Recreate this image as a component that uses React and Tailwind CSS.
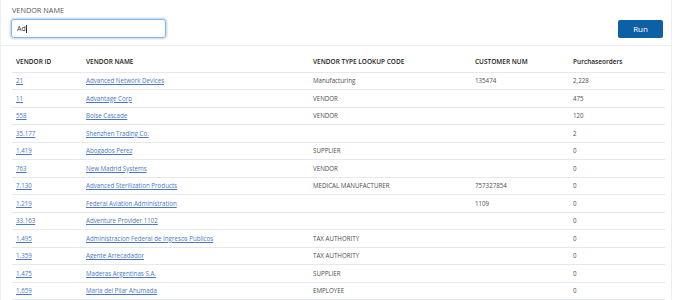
import React from 'react'

const rows = [
  ['21', 'Advanced Network Devices', 'Manufacturing', '135474', '2,228'],
  ['11', 'Advantage Corp', 'VENDOR', '', '475'],
  ['558', 'Boise Cascade', 'VENDOR', '', '120'],
  ['35.177', 'Shenzhen Trading Co.', '', '', '2'],
  ['1.419', 'Abogados Perez', 'SUPPLIER', '', '0'],
  ['763', 'New Madrid Systems', 'VENDOR', '', '0'],
  ['7.130', 'Advanced Sterilization Products', 'MEDICAL MANUFACTURER', '757327854', '0'],
  ['1.219', 'Federal Aviation Administration', '', '1109', '0'],
  ['33.163', 'Adventure Provider 1102', '', '', '0'],
  ['1.495', 'Administracion Federal de Ingresos Publicos', 'TAX AUTHORITY', '', '0'],
  ['1.359', 'Agente Arrecadador', 'TAX AUTHORITY', '', '0'],
  ['1.475', 'Maderas Argentinas S.A.', 'SUPPLIER', '', '0'],
  ['1.659', 'Maria del Pilar Ahumada', 'EMPLOYEE', '', '0'],
]

const App = () => {
  return (
    <div className="w-[675px] h-[300px] overflow-hidden bg-white" style={{ fontFamily: '"Open Sans", "Liberation Sans", sans-serif' }}>
      <div className="w-[672px] h-full border-r border-l border-[#eceef1]">
        {/* Filter bar */}
        <div className="flex items-end justify-between h-[46px] pl-[10px] pr-[8px] pb-[7px] border-b border-[#eceef1]">
          <div className="flex flex-col">
            <label className="text-[7.3px] leading-none text-[#555] uppercase mb-[5px] ml-[1px]">Vendor Name</label>
            <div className="w-[155px] h-[19px] border border-[#86b4ea] rounded-[3px] shadow-[0_0_0_1.5px_rgba(120,170,235,0.35)] flex items-center px-[5px]">
              <span className="text-[7px] text-[#333] leading-none">Ad</span>
              <span className="w-px h-[8px] bg-[#333]" />
            </div>
          </div>
          <button className="w-[45px] h-[18px] rounded-[2px] bg-[#0d5fa6] text-white text-[8px] leading-none">
            Run
          </button>
        </div>

        {/* Results table */}
        <div className="px-[11px] pt-[7px]">
          <table className="w-[653px] border-collapse text-[6.2px] text-[#4d4d4d]">
            <thead>
              <tr className="h-[19px] border-b border-[#e6e8eb] text-[6.5px]">
                <th className="w-[74px] text-left font-semibold text-[#222] pl-[4px]">VENDOR ID</th>
                <th className="w-[227px] text-left font-semibold text-[#222]">VENDOR NAME</th>
                <th className="w-[162px] text-left font-semibold text-[#222]">VENDOR TYPE LOOKUP CODE</th>
                <th className="w-[98px] text-left font-semibold text-[#222]">CUSTOMER NUM</th>
                <th className="text-left font-semibold text-[#222]">Purchaseorders</th>
              </tr>
            </thead>
            <tbody>
              {rows.map((r) => (
                <tr key={r[0]} className="h-[17.5px] border-b border-[#e6e8eb]">
                  <td className="pl-[4px]"><a className="text-[#4a78c4] underline">{r[0]}</a></td>
                  <td><a className="text-[#4a78c4] underline">{r[1]}</a></td>
                  <td>{r[2]}</td>
                  <td>{r[3]}</td>
                  <td>{r[4]}</td>
                </tr>
              ))}
            </tbody>
          </table>
        </div>
      </div>
    </div>
  )
}

export default App
